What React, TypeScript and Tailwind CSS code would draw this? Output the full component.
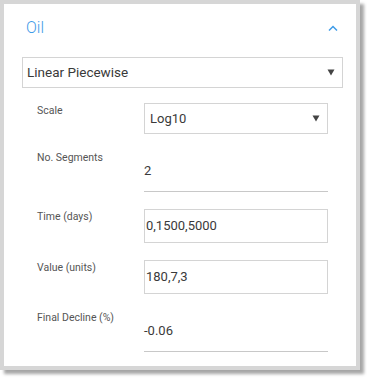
import type { ReactNode } from 'react'

const font = { fontFamily: 'Roboto, "Liberation Sans", sans-serif' }

function Caret() {
  return (
    <svg width="8" height="7" viewBox="0 0 8 7" className="shrink-0">
      <path d="M0.5 0.5 H7.5 L4 6.5 Z" fill="#444" />
    </svg>
  )
}

function Row({ label, children }: { label: string; children: ReactNode }) {
  return (
    <div className="flex">
      <div className="w-[107px] shrink-0 pt-[1px] text-[10.5px] leading-[14px] text-[#555]">{label}</div>
      <div className="w-[184px]">{children}</div>
    </div>
  )
}

function SelectBox({ value }: { value: string }) {
  return (
    <div className="flex h-[31px] items-center justify-between border border-[#d4d4d4] pl-[5px] pr-[7px] text-[13px] text-[#3a3a3a]">
      <span>{value}</span>
      <Caret />
    </div>
  )
}

function TextBox({ value }: { value: string }) {
  return (
    <div className="flex h-[34px] items-center border border-[#d4d4d4] pl-[1px] text-[13px] text-[#3a3a3a]">
      {value}
    </div>
  )
}

function LineField({ value }: { value: string }) {
  return (
    <div className="h-[42px] border-b border-[#c8c8c8] pt-[11px] text-[13px] leading-[20px] text-[#3a3a3a]">
      {value}
    </div>
  )
}

export default function App() {
  return (
    <div className="h-[380px] w-[367px] bg-white" style={font}>
      <div className="h-[370px] w-[360px] border-4 border-[#d6d6d6] bg-white shadow-[4px_4px_3px_rgba(0,0,0,0.35)]">
        <div className="flex h-[48px] items-center justify-between pl-[22px] pr-[18px]">
          <span className="text-[16px] font-light text-[#3f9ce8]">Oil</span>
          <svg width="10" height="6" viewBox="0 0 10 6">
            <path d="M1 5.5 L5 1.5 L9 5.5" fill="none" stroke="#3f9ce8" strokeWidth="1.5" />
          </svg>
        </div>
        <div className="ml-[18px] mr-[13px] mt-[5px] flex h-[31px] items-center justify-between border border-[#d4d4d4] pl-[4px] pr-[7px] text-[13.5px] text-[#3a3a3a]">
          <span>Linear Piecewise</span>
          <Caret />
        </div>
        <div className="ml-[33px] mt-[15px] flex flex-col">
          <Row label="Scale">
            <SelectBox value="Log10" />
          </Row>
          <div className="h-[16px]" />
          <Row label="No. Segments">
            <LineField value="2" />
          </Row>
          <div className="h-[17px]" />
          <Row label="Time (days)">
            <TextBox value="0,1500,5000" />
          </Row>
          <div className="h-[17px]" />
          <Row label="Value (units)">
            <TextBox value="180,7,3" />
          </Row>
          <div className="h-[16px]" />
          <Row label="Final Decline (%)">
            <LineField value="-0.06" />
          </Row>
        </div>
      </div>
    </div>
  )
}
